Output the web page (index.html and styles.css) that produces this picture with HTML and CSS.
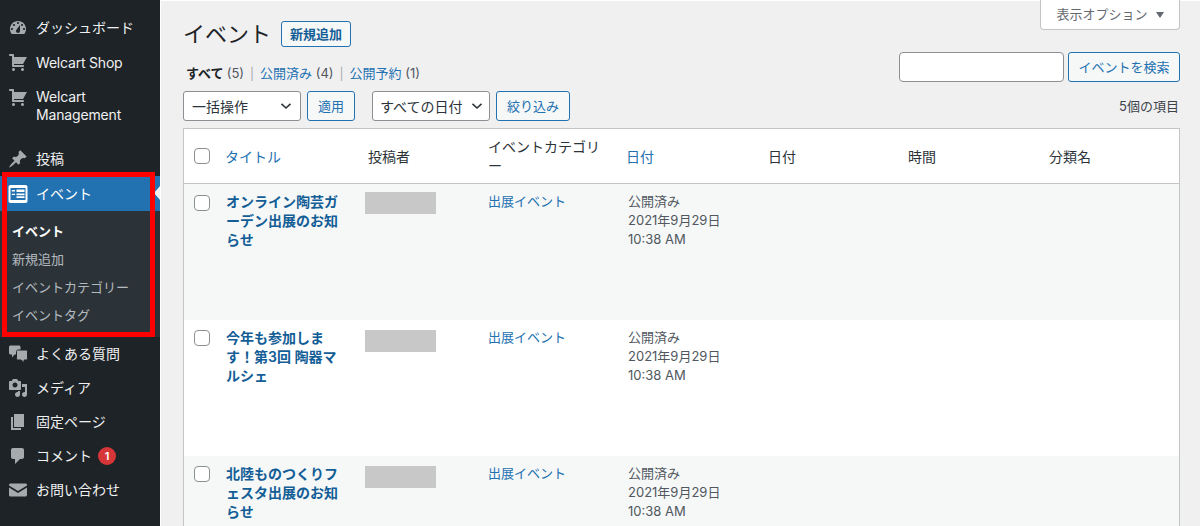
FILE: index.html
```html
<!DOCTYPE html>
<html lang="ja">
<head>
<meta charset="utf-8">
<title>イベント</title>
<link rel="stylesheet" href="styles.css">
</head>
<body>
<div class="app">
  <nav class="sidebar">
    <ul class="menu">
      <li class="item"><svg class="ico" viewBox="0 0 20 20"><path fill-rule="evenodd" d="M3.76 16h12.48c1.1-1.37 1.76-3.11 1.76-5 0-4.42-3.58-8-8-8s-8 3.58-8 8c0 1.89.66 3.63 1.76 5zM10 4c.55 0 1 .45 1 1s-.45 1-1 1-1-.45-1-1 .45-1 1-1zM6 6c.55 0 1 .45 1 1s-.45 1-1 1-1-.45-1-1 .45-1 1-1zm8 0c.55 0 1 .45 1 1s-.45 1-1 1-1-.45-1-1 .45-1 1-1zm-2 1v6c0 1.1-.9 2-2 2s-2-.9-2-2c0-.57.24-1.08.63-1.45zM4 10c.55 0 1 .45 1 1s-.45 1-1 1-1-.45-1-1 .45-1 1-1zm12 0c.55 0 1 .45 1 1s-.45 1-1 1-1-.45-1-1 .45-1 1-1z"/></svg><span>ダッシュボード</span></li>
      <li class="item item-latin"><svg class="ico" viewBox="0 0 20 20"><path d="M6 13h9c.55 0 1 .45 1 1s-.45 1-1 1H5c-.55 0-1-.45-1-1V4H2c-.55 0-1-.45-1-1s.45-1 1-1h3c.55 0 1 .45 1 1v2h13l-4 7H6v1zm-.5 3c.83 0 1.5.67 1.5 1.5S6.33 19 5.5 19 4 18.33 4 17.5 4.67 16 5.5 16zm9 0c.83 0 1.5.67 1.5 1.5s-.67 1.5-1.5 1.5-1.5-.67-1.5-1.5.67-1.5 1.5-1.5z"/></svg><span>Welcart Shop</span></li>
      <li class="item item-tall"><svg class="ico" viewBox="0 0 20 20"><path d="M6 13h9c.55 0 1 .45 1 1s-.45 1-1 1H5c-.55 0-1-.45-1-1V4H2c-.55 0-1-.45-1-1s.45-1 1-1h3c.55 0 1 .45 1 1v2h13l-4 7H6v1zm-.5 3c.83 0 1.5.67 1.5 1.5S6.33 19 5.5 19 4 18.33 4 17.5 4.67 16 5.5 16zm9 0c.83 0 1.5.67 1.5 1.5s-.67 1.5-1.5 1.5-1.5-.67-1.5-1.5.67-1.5 1.5-1.5z"/></svg><span>Welcart<br>Management</span></li>
      <li class="item item-sep"><svg class="ico" viewBox="0 0 20 20"><path d="M10.44 3.02l1.82-1.82 6.36 6.35-1.83 1.82c-1.05-.68-2.48-.57-3.41.36l-.75.75c-.92.93-1.04 2.35-.35 3.41l-1.83 1.82-2.41-2.41-2.8 2.79c-.42.42-3.38 2.71-3.8 2.29s1.86-3.39 2.28-3.81l2.79-2.79L4.1 9.36l1.83-1.82c1.05.69 2.48.57 3.4-.36l.75-.75c.93-.92 1.05-2.35.36-3.41z"/></svg><span>投稿</span></li>
      <li class="group">
        <div class="item item-current">
          <svg class="ico ico-event" viewBox="0 0 20 20"><rect x="0.5" y="1" width="19" height="18" rx="2" fill="#fff"/><path fill="#2271b1" d="M2.500 4h15v12h-15z"/><path fill="#fff" d="M8.500 5.500H16.500v2.500H8.500zM8.500 9.500H16.500v1.700H8.500zM8.500 12.300H16.500v1.800H8.500zM3.800 6H7v1.400H3.800zM3.800 9.700H7v1.400H3.800z"/></svg><span>イベント</span>
          <i class="arrow"></i>
        </div>
        <ul class="submenu">
          <li class="sub sub-current">イベント</li>
          <li class="sub">新規追加</li>
          <li class="sub">イベントカテゴリー</li>
          <li class="sub">イベントタグ</li>
        </ul>
        <div class="highlight"></div>
      </li>
      <li class="item"><svg class="ico" viewBox="0 0 20 20"><path d="M2.500 1.500h8.500c.8 0 1.500.7 1.500 1.500v6c0 .8-.7 1.500-1.500 1.500H6.500L4 13.500v-3H2.500C1.700 10.500 1 9.800 1 9V3c0-.8.7-1.500 1.500-1.500z"/><path stroke="#1d2327" stroke-width="1" d="M10 6h8c.8 0 1.500.7 1.500 1.500v7c0 .8-.7 1.500-1.500 1.500h-2v3l-2.800-3H10c-.8 0-1.500-.7-1.500-1.500v-7C8.500 6.700 9.200 6 10 6z"/></svg><span>よくある質問</span></li>
      <li class="item"><svg class="ico" viewBox="0 0 20 20"><path fill-rule="evenodd" d="M13 11V4c0-.55-.45-1-1-1h-1.670L9 1H5L3.670 3H2c-.55 0-1 .45-1 1v7c0 .55.45 1 1 1h10c.55 0 1-.45 1-1zM7 4.500c1.380 0 2.500 1.120 2.500 2.500S8.380 9.500 7 9.500 4.500 8.380 4.500 7 5.620 4.500 7 4.500z"/><path d="M14 6h5v10.500c0 1.380-1.120 2.500-2.500 2.500S14 17.880 14 16.500s1.120-2.500 2.500-2.500c.170 0 .340.020.5.050V9h-3V6zm-4 8.050V13h2v3.500c0 1.380-1.120 2.500-2.500 2.500S7 17.880 7 16.500 8.120 14 9.500 14c.170 0 .340.020.5.050z"/></svg><span>メディア</span></li>
      <li class="item"><svg class="ico" viewBox="0 0 20 20"><path d="M6 15V2h10v13H6zm-1 1h8v2H3V5h2v11z"/></svg><span>固定ページ</span></li>
      <li class="item"><svg class="ico" viewBox="0 0 20 20"><path d="M5 2h9c1.100 0 2 .9 2 2v7c0 1.100-.9 2-2 2h-2l-5 5v-5H5c-1.100 0-2-.9-2-2V4c0-1.100.9-2 2-2z"/></svg><span>コメント</span><b class="badge">1</b></li>
      <li class="item"><svg class="ico" viewBox="0 0 20 20"><path d="M1 5c0-.8.7-1.500 1.500-1.500h15c.8 0 1.500.7 1.500 1.500v.5l-9 5.500-9-5.500z"/><path d="M1 7.500l9 5.500 9-5.500V15c0 .8-.7 1.500-1.500 1.500h-15C1.700 16.500 1 15.800 1 15z"/></svg><span>お問い合わせ</span></li>
    </ul>
  </nav>

  <main class="content">
    <div class="screen-meta"><div class="screen-tab">表示オプション<i class="tri"></i></div></div>

    <div class="title-row">
      <h1 class="page-title">イベント</h1>
      <a class="btn btn-add">新規追加</a>
    </div>

    <div class="views-row">
      <ul class="views">
        <li class="view-current">すべて <span class="count">(5)</span></li>
        <li class="pipe">|</li>
        <li><a class="link">公開済み</a> <span class="count">(4)</span></li>
        <li class="pipe">|</li>
        <li><a class="link">公開予約</a> <span class="count">(1)</span></li>
      </ul>
      <div class="search">
        <div class="input"></div>
        <a class="btn btn-search">イベントを検索</a>
      </div>
    </div>

    <div class="tablenav">
      <div class="select select-bulk">一括操作<svg class="chev" viewBox="0 0 12 8"><path d="M1.500 1.800L6 6l4.500-4.200"/></svg></div>
      <a class="btn btn-apply">適用</a>
      <div class="select select-date">すべての日付<svg class="chev" viewBox="0 0 12 8"><path d="M1.500 1.800L6 6l4.500-4.200"/></svg></div>
      <a class="btn btn-filter">絞り込み</a>
      <div class="num-items">5個の項目</div>
    </div>

    <table class="list">
      <colgroup>
        <col class="c-check"><col class="c-title"><col class="c-author"><col class="c-cat"><col class="c-date"><col class="c-date2"><col class="c-time"><col class="c-tax">
      </colgroup>
      <thead>
        <tr>
          <th class="cell-check"><span class="checkbox checkbox-head"></span></th>
          <th class="th-link th-title">タイトル</th>
          <th>投稿者</th>
          <th class="th-cat">イベントカテゴリ<br>ー</th>
          <th class="th-link th-date">日付</th>
          <th>日付</th>
          <th>時間</th>
          <th>分類名</th>
        </tr>
      </thead>
      <tbody>
        <tr class="alt">
          <td class="cell-check"><span class="checkbox"></span></td>
          <td class="post-title">オンライン陶芸ガ<br>ーデン出展のお知<br>らせ</td>
          <td><div class="redact"></div></td>
          <td class="link">出展イベント</td>
          <td>公開済み<br>2021年9月29日<br>10:38 AM</td>
          <td></td><td></td><td></td>
        </tr>
        <tr>
          <td class="cell-check cell-check-low"><span class="checkbox"></span></td>
          <td class="post-title">今年も参加しま<br>す！第3回 陶器マ<br>ルシェ</td>
          <td><div class="redact redact-low"></div></td>
          <td class="link">出展イベント</td>
          <td>公開済み<br>2021年9月29日<br>10:38 AM</td>
          <td></td><td></td><td></td>
        </tr>
        <tr class="alt">
          <td class="cell-check cell-check-low"><span class="checkbox"></span></td>
          <td class="post-title">北陸ものつくりフ<br>ェスタ出展のお知<br>らせ</td>
          <td><div class="redact redact-low"></div></td>
          <td class="link">出展イベント</td>
          <td>公開済み<br>2021年9月29日<br>10:38 AM</td>
          <td></td><td></td><td></td>
        </tr>
      </tbody>
    </table>
  </main>
</div>
</body>
</html>
```

FILE: styles.css
```css
* { box-sizing: border-box; }
html, body { margin: 0; padding: 0; height: 526px; overflow: hidden; }
body {
  background: #f0f0f1;
  color: #3c434a;
  font-family: Inter, "Noto Sans CJK JP", sans-serif;
  font-size: 13px;
  line-height: 19px;
}
ul { list-style: none; margin: 0; padding: 0; }
a { text-decoration: none; }

.app { display: flex; height: 526px; overflow: hidden; }

/* Sidebar */
.sidebar { flex: 0 0 160px; width: 160px; background: #1d2327; padding-top: 11px; }
.item {
  position: relative;
  display: flex;
  align-items: center;
  height: 34px;
  padding-left: 36px;
  color: #f0f0f1;
  font-size: 14px;
  line-height: 18px;
}
.ico { position: absolute; left: 8px; top: 7px; width: 20px; height: 20px; fill: #a7aaad; }
.item-latin { padding-top: 1px; letter-spacing: -.2px; }
.item-tall { height: 54px; margin-top: 1px; align-items: flex-start; padding-top: 8px; letter-spacing: -.15px; }
.item-sep { margin-top: 8px; }
.group { position: relative; }
.item-current { height: 35px; background: #2271b1; color: #fff; }
.item-current .ico { top: 8px; left: 8px; width: 20px; height: 20px; }
.ico-event { fill: #fff; }
.arrow {
  position: absolute; right: 0; top: 10px;
  border-style: solid; border-width: 7px 6px 7px 0;
  border-color: transparent #f0f0f1 transparent transparent;
}
.submenu { background: #2c3338; padding: 7px 0; }
.sub { height: 28px; line-height: 27px; padding-left: 12px; font-size: 13px; color: rgba(240,246,252,.7); }
.sub-current { color: #fff; font-weight: 700; }
.highlight { position: absolute; left: 2px; top: -4px; width: 153px; height: 165px; border: 5px solid #f00; pointer-events: none; }
.badge {
  margin-left: 6px;
  width: 18px; height: 18px; border-radius: 50%;
  background: #d63638; color: #fff;
  font-size: 11px; font-weight: 600; line-height: 18px; text-align: center;
}

/* Content */
.content { flex: 1; min-width: 0; padding: 0 20px 0 22px; border-top: 1px solid #fff; border-left: 1px solid #fff; }
.screen-meta { display: flex; justify-content: flex-end; height: 0; }
.screen-tab {
  display: flex; align-items: center; justify-content: center;
  width: 140px; height: 30px; margin-top: -1px;
  background: #fff; border: 1px solid #c3c4c7; border-top: 0;
  border-radius: 0 0 4px 4px; color: #646970; font-size: 13px;
}
.tri { margin-left: 8px; border-style: solid; border-width: 6px 4.500px 0; border-color: #646970 transparent transparent; }

.title-row { display: flex; align-items: center; height: 26px; margin-top: 20px; }
.page-title { margin: 0; font-size: 22px; font-weight: 400; line-height: 26px; color: #1d2327; }
.btn {
  display: flex; align-items: center; justify-content: center;
  background: #f6f7f7; border: 1px solid #2271b1; border-radius: 3px;
  color: #2271b1; font-size: 13px; height: 30px;
}
.btn-add { width: 70px; height: 26px; margin-left: 10px; font-weight: 600; color: #135e96; }

.views-row { display: flex; justify-content: space-between; margin-top: 5px; height: 30px; }
.views { display: flex; align-items: center; gap: 6px; padding-left: 3px; height: 42px; font-size: 13px; color: #50575e; }
.view-current { font-weight: 700; color: #1d2327; }
.count { font-weight: 400; color: #50575e; }
.pipe { color: #a7aaad; font-size: 12px; }
.link { color: #2271b1; }
.search { display: flex; gap: 4px; }
.input { width: 165px; height: 30px; background: #fff; border: 1px solid #8c8f94; border-radius: 4px; }
.btn-search { width: 112px; }

.tablenav { display: flex; align-items: center; height: 30px; margin-top: 9px; }
.select {
  display: flex; align-items: center; justify-content: space-between;
  width: 118px; height: 30px; padding: 0 8px;
  background: #fff; border: 1px solid #8c8f94; border-radius: 3px;
  font-size: 14px; color: #2c3338;
}
.chev { width: 12px; height: 8px; fill: none; stroke: #2c3338; stroke-width: 1.600; }
.btn-apply { width: 48px; margin-left: 6px; }
.select-date { margin-left: 17px; padding-left: 7px; padding-right: 6px; }
.btn-filter { width: 74px; margin-left: 6px; }
.num-items { margin-left: auto; padding-right: 1px; color: #3c434a; }

.list {
  width: 997px; margin-top: 7px;
  table-layout: fixed; border-collapse: separate; border-spacing: 0;
  background: #fff; border: 1px solid #c3c4c7;
}
.c-check { width: 34px; } .c-title { width: 142px; } .c-author { width: 120px; } .c-cat { width: 140px; }
.c-date { width: 140px; } .c-date2 { width: 140px; } .c-time { width: 141px; } .c-tax { width: 138px; }
th {
  height: 55px; padding: 0 8px; text-align: left; font-weight: 400;
  font-size: 14px; color: #2c3338; border-bottom: 1px solid #c3c4c7; vertical-align: middle;
}
.th-link { color: #2271b1; }
.th-title { padding-left: 7px; }
th.th-date { padding-left: 6px; }
td { height: 136px; padding: 8px; vertical-align: top; color: #50575e; font-size: 13px; line-height: 19px; }
td.link { color: #2271b1; }
.alt td { background: #f6f7f7; }
.cell-check { padding: 0 0 0 10px; }
td.cell-check { padding-top: 11px; }
td.cell-check-low { padding-top: 10px; }
.checkbox { display: block; width: 16px; height: 16px; background: #fff; border: 1px solid #8c8f94; border-radius: 4px; }
.post-title { padding-left: 8px; color: #135e96; font-size: 14px; font-weight: 600; }
td.post-title { color: #135e96; }
.redact { width: 71px; height: 22px; margin-left: -3px; background: #c8c8c8; }
.redact-low { margin-top: 2px; }
```
